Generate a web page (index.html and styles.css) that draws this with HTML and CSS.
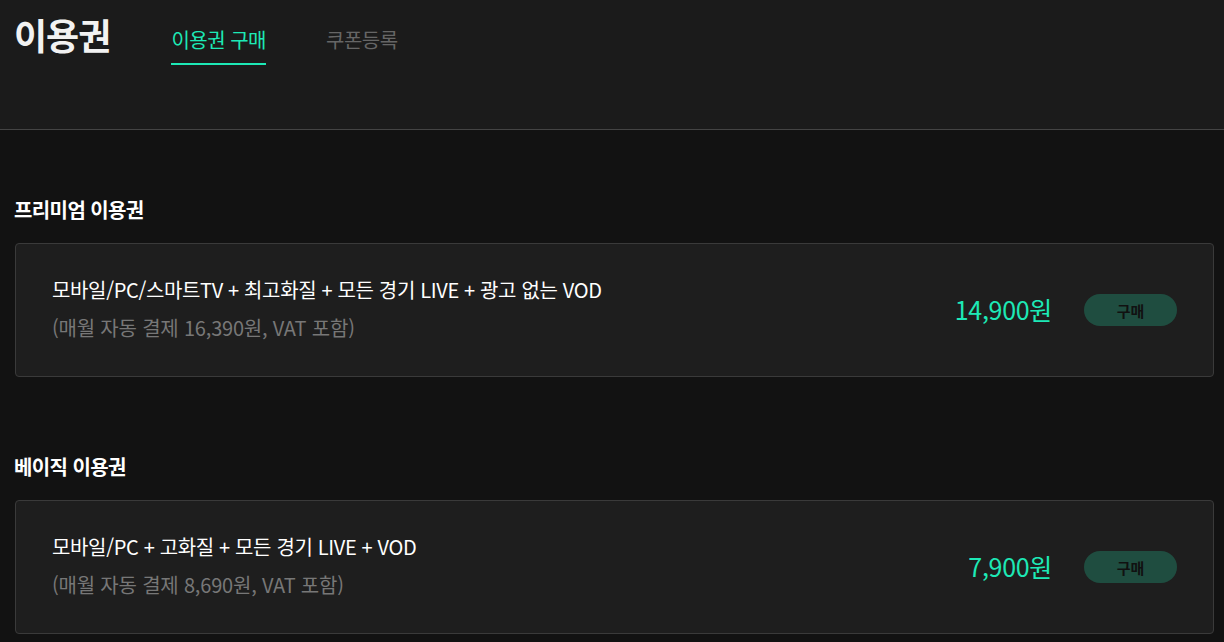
FILE: index.html
```html
<!DOCTYPE html>
<html lang="ko">
<head>
<meta charset="utf-8">
<title>이용권</title>
<link rel="stylesheet" href="styles.css">
</head>
<body>
<header class="top">
  <h1 class="page-title">이용권</h1>
  <nav class="tabs">
    <a class="tab active">이용권 구매</a>
    <a class="tab">쿠폰등록</a>
  </nav>
</header>
<main class="content">
  <section class="plan-group">
    <h2 class="group-title">프리미엄 이용권</h2>
    <div class="plan-card">
      <div class="plan-info">
        <p class="plan-desc">모바일/PC/스마트TV + 최고화질 + 모든 경기 LIVE + 광고 없는 VOD</p>
        <p class="plan-sub">(매월 자동 결제 16,390원, VAT 포함)</p>
      </div>
      <div class="plan-price">14,900원</div>
      <button class="buy-btn">구매</button>
    </div>
  </section>
  <section class="plan-group">
    <h2 class="group-title">베이직 이용권</h2>
    <div class="plan-card">
      <div class="plan-info">
        <p class="plan-desc">모바일/PC + 고화질 + 모든 경기 LIVE + VOD</p>
        <p class="plan-sub">(매월 자동 결제 8,690원, VAT 포함)</p>
      </div>
      <div class="plan-price">7,900원</div>
      <button class="buy-btn">구매</button>
    </div>
  </section>
</main>
</body>
</html>
```

FILE: styles.css
```css
* { box-sizing: border-box; }
html, body { margin: 0; padding: 0; }
body {
  background: #121212;
  color: #fff;
  font-family: "Noto Sans CJK KR", "Noto Sans", sans-serif;
  overflow: hidden;
}
.top {
  background: #1b1b1b;
  height: 130px;
  border-bottom: 1px solid #444;
  display: flex;
  align-items: flex-start;
  padding: 0 0 0 14px;
}
.page-title {
  margin: 0;
  font-size: 36px;
  font-weight: 700;
  line-height: 1;
  padding-top: 16px;
  color: #f2f2f2;
  letter-spacing: -1px;
}
.tabs {
  display: flex;
  gap: 60px;
  margin-left: 61px;
  padding-top: 26px;
}
.tab {
  font-size: 20px;
  line-height: 27px;
  color: #666;
  padding-bottom: 10px;
  border-bottom: 2px solid transparent;
  letter-spacing: -0.5px;
}
.tab.active {
  color: #1de9b6;
  border-bottom-color: #1de9b6;
}
.content {
  padding: 66px 10px 0 15px;
}
.plan-group { margin-bottom: 76px; }
.group-title {
  margin: 0 0 19px -1px;
  font-size: 20px;
  font-weight: 700;
  line-height: 28px;
  letter-spacing: -0.6px;
  color: #fff;
}
.plan-card {
  background: #1e1e1e;
  border: 1px solid #3a3a3a;
  border-radius: 4px;
  height: 134px;
  display: flex;
  align-items: center;
  padding: 0 36px 0 36px;
}
.plan-info {
  flex: 1;
  padding-bottom: 3px;
}
.plan-desc {
  margin: 0;
  font-size: 20px;
  line-height: 26px;
  color: #fff;
  letter-spacing: -0.35px;
}
.plan-sub {
  margin: 12px 0 0;
  font-size: 20px;
  line-height: 26px;
  color: #777;
  letter-spacing: -0.2px;
}
.plan-price {
  font-size: 25px;
  line-height: 32px;
  padding-bottom: 3px;
  color: #1de9b6;
  letter-spacing: -0.3px;
  margin-right: 32px;
}
.buy-btn {
  width: 93px;
  height: 32px;
  border: none;
  border-radius: 16px;
  background: #1f4d40;
  color: #111;
  font-family: inherit;
  font-size: 15px;
  font-weight: 700;
  padding: 0;
}
```
